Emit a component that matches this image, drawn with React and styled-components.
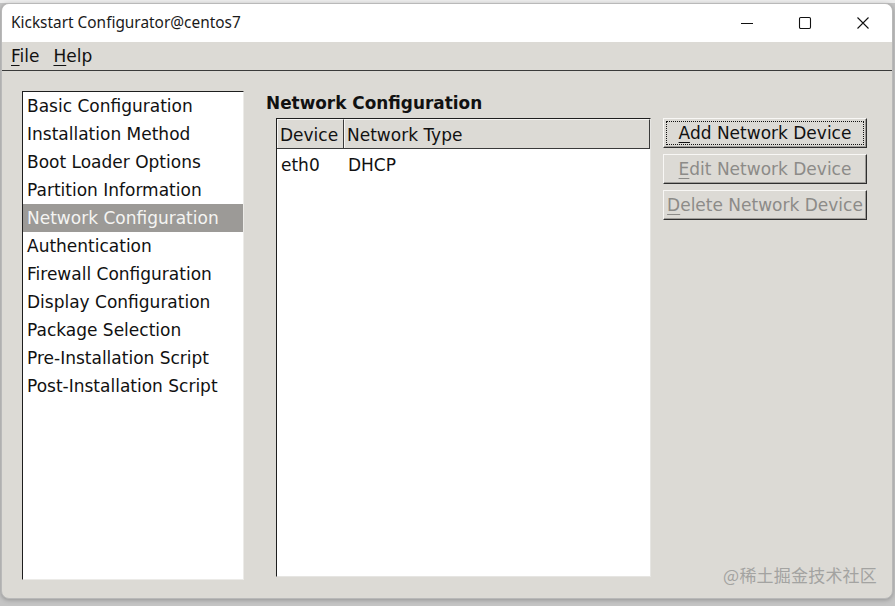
import React from "react";
import styled, { createGlobalStyle } from "styled-components";

const Global = createGlobalStyle`
  html, body { margin: 0; padding: 0; }
  body { width: 895px; height: 606px; overflow: hidden; background: #c9c9c9; }
  * { box-sizing: border-box; }
`;

const Page = styled.div`
  width: 895px;
  height: 606px;
  padding: 3px 2px 0 1px;
  background: linear-gradient(#ececec 0 3px, #c4c4c4 3px);
`;

const Window = styled.div`
  position: relative;
  width: 892px;
  height: 596px;
  border-radius: 8px;
  overflow: hidden;
  border: 1px solid #b9b9b9;
  background: #dcdad5;
  display: flex;
  flex-direction: column;
  box-shadow: 0 1px 4px rgba(0, 0, 0, 0.25);
`;

const TitleBar = styled.div`
  height: 38px;
  background: #ffffff;
  display: flex;
  align-items: center;
  padding-left: 9px;
  flex-shrink: 0;
`;

const Title = styled.div`
  flex: 1;
  font-family: "Noto Sans", "Open Sans", sans-serif;
  font-size: 15.4px;
  color: #1a1a1a;
  padding-bottom: 2px;
`;

const Caption = styled.div`
  width: 58px;
  height: 38px;
  display: flex;
  align-items: center;
  justify-content: center;
  color: #111;
`;

const MenuBar = styled.div`
  height: 29px;
  flex-shrink: 0;
  display: flex;
  align-items: center;
  gap: 14px;
  padding-left: 9px;
  background: #dcdad5;
  border-bottom: 1px solid #3a3a3a;
`;

const MenuItem = styled.span`
  font-family: "DejaVu Sans", sans-serif;
  font-size: 17px;
  color: #111;
  u { text-decoration-thickness: 1px; text-underline-offset: 3px; }
`;

const Content = styled.div`
  flex: 1;
  display: flex;
  padding: 20px 0 18px 20px;
`;

const SideList = styled.div`
  width: 222px;
  background: #ffffff;
  border-top: 1px solid #1e1e1e;
  border-left: 1px solid #1e1e1e;
  border-right: 1px solid #ecebe8;
  border-bottom: 1px solid #ecebe8;
  display: flex;
  flex-direction: column;
`;

const SideItem = styled.div`
  height: 28px;
  line-height: 28px;
  padding-left: 4px;
  font-family: "DejaVu Sans", sans-serif;
  font-size: 17px;
  color: ${(p) => (p.$selected ? "#f4f4f2" : "#111")};
  background: ${(p) => (p.$selected ? "#9c9a97" : "transparent")};
`;

const Main = styled.div`
  flex: 1;
  display: flex;
  flex-direction: column;
  padding-left: 22px;
`;

const Heading = styled.div`
  font-family: "DejaVu Sans", sans-serif;
  font-weight: bold;
  font-size: 16.9px;
  line-height: 22px;
  color: #111;
  margin-top: 1px;
`;

const Body = styled.div`
  flex: 1;
  display: flex;
  gap: 12px;
  margin-top: 4px;
  padding-left: 10px;
  padding-bottom: 3px;
`;

const Table = styled.div`
  width: 375px;
  background: #ffffff;
  border-top: 1px solid #1e1e1e;
  border-left: 1px solid #1e1e1e;
  border-right: 1px solid #e6e5e2;
  border-bottom: 1px solid #e6e5e2;
  display: flex;
  flex-direction: column;
`;

const HeaderRow = styled.div`
  display: flex;
  height: 30px;
  background: #dcdad5;
  border-bottom: 1px solid #3a3a3a;
`;

const HeaderCell = styled.div`
  width: ${(p) => p.$w};
  flex: ${(p) => (p.$grow ? 1 : "none")};
  padding-left: 2px;
  line-height: 30px;
  font-family: "DejaVu Sans", sans-serif;
  font-size: 17px;
  color: #111;
  border-top: 1px solid #f6f5f3;
  border-left: 1px solid #f6f5f3;
  border-right: 1px solid #3a3a3a;
`;

const Row = styled.div`
  display: flex;
  height: 31px;
  align-items: center;
`;

const Cell = styled.div`
  width: ${(p) => p.$w};
  padding-left: 4px;
  font-family: "DejaVu Sans", sans-serif;
  font-size: 17px;
  color: #111;
`;

const Buttons = styled.div`
  display: flex;
  flex-direction: column;
  gap: 6px;
`;

const Button = styled.div`
  width: 204px;
  height: 30px;
  padding: 2px;
  background: #dcdad5;
  border-top: 1px solid #f8f7f5;
  border-left: 1px solid #f8f7f5;
  border-right: 1px solid #2e2e2e;
  border-bottom: 1px solid #2e2e2e;
  box-shadow: inset -1px -1px 0 #9e9c98;
  display: flex;
`;

const ButtonFace = styled.div`
  flex: 1;
  display: flex;
  align-items: center;
  justify-content: center;
  border: 1px dotted ${(p) => (p.$focus ? "#111" : "transparent")};
  font-family: "DejaVu Sans", sans-serif;
  font-size: 17px;
  color: ${(p) => (p.$disabled ? "#8c8b88" : "#111")};
  u { text-decoration-thickness: 1px; text-underline-offset: 3px; }
`;

const Watermark = styled.div`
  position: absolute;
  right: 15px;
  bottom: 11px;
  font-family: "Noto Sans CJK SC", "Noto Sans", sans-serif;
  font-size: 17px;
  color: #a3a3a1;
  letter-spacing: 0.2px;
`;

const items = [
  "Basic Configuration",
  "Installation Method",
  "Boot Loader Options",
  "Partition Information",
  "Network Configuration",
  "Authentication",
  "Firewall Configuration",
  "Display Configuration",
  "Package Selection",
  "Pre-Installation Script",
  "Post-Installation Script",
];

export default function App() {
  return (
    <Page>
      <Global />
      <Window>
        <TitleBar>
          <Title>Kickstart Configurator@centos7</Title>
          <Caption>
            <svg width="14" height="14" viewBox="0 0 14 14">
              <path d="M1 7.5h12" stroke="#111" strokeWidth="1.1" />
            </svg>
          </Caption>
          <Caption>
            <svg width="14" height="14" viewBox="0 0 14 14">
              <rect x="1.5" y="1.5" width="11" height="11" rx="1.2" fill="none" stroke="#111" strokeWidth="1.1" />
            </svg>
          </Caption>
          <Caption>
            <svg width="14" height="14" viewBox="0 0 14 14">
              <path d="M1.5 1.5l11 11M12.5 1.5l-11 11" stroke="#111" strokeWidth="1.1" />
            </svg>
          </Caption>
        </TitleBar>
        <MenuBar>
          <MenuItem>
            <u>F</u>ile
          </MenuItem>
          <MenuItem>
            <u>H</u>elp
          </MenuItem>
        </MenuBar>
        <Content>
          <SideList>
            {items.map((t) => (
              <SideItem key={t} $selected={t === "Network Configuration"}>
                {t}
              </SideItem>
            ))}
          </SideList>
          <Main>
            <Heading>Network Configuration</Heading>
            <Body>
              <Table>
                <HeaderRow>
                  <HeaderCell $w="67px">Device</HeaderCell>
                  <HeaderCell $grow>Network Type</HeaderCell>
                </HeaderRow>
                <Row>
                  <Cell $w="67px">eth0</Cell>
                  <Cell>DHCP</Cell>
                </Row>
              </Table>
              <Buttons>
                <Button>
                  <ButtonFace $focus>
                    <span>
                      <u>A</u>dd Network Device
                    </span>
                  </ButtonFace>
                </Button>
                <Button>
                  <ButtonFace $disabled>
                    <span>
                      <u>E</u>dit Network Device
                    </span>
                  </ButtonFace>
                </Button>
                <Button>
                  <ButtonFace $disabled>
                    <span>
                      <u>D</u>elete Network Device
                    </span>
                  </ButtonFace>
                </Button>
              </Buttons>
            </Body>
          </Main>
        </Content>
        <Watermark>@稀土掘金技术社区</Watermark>
      </Window>
    </Page>
  );
}
